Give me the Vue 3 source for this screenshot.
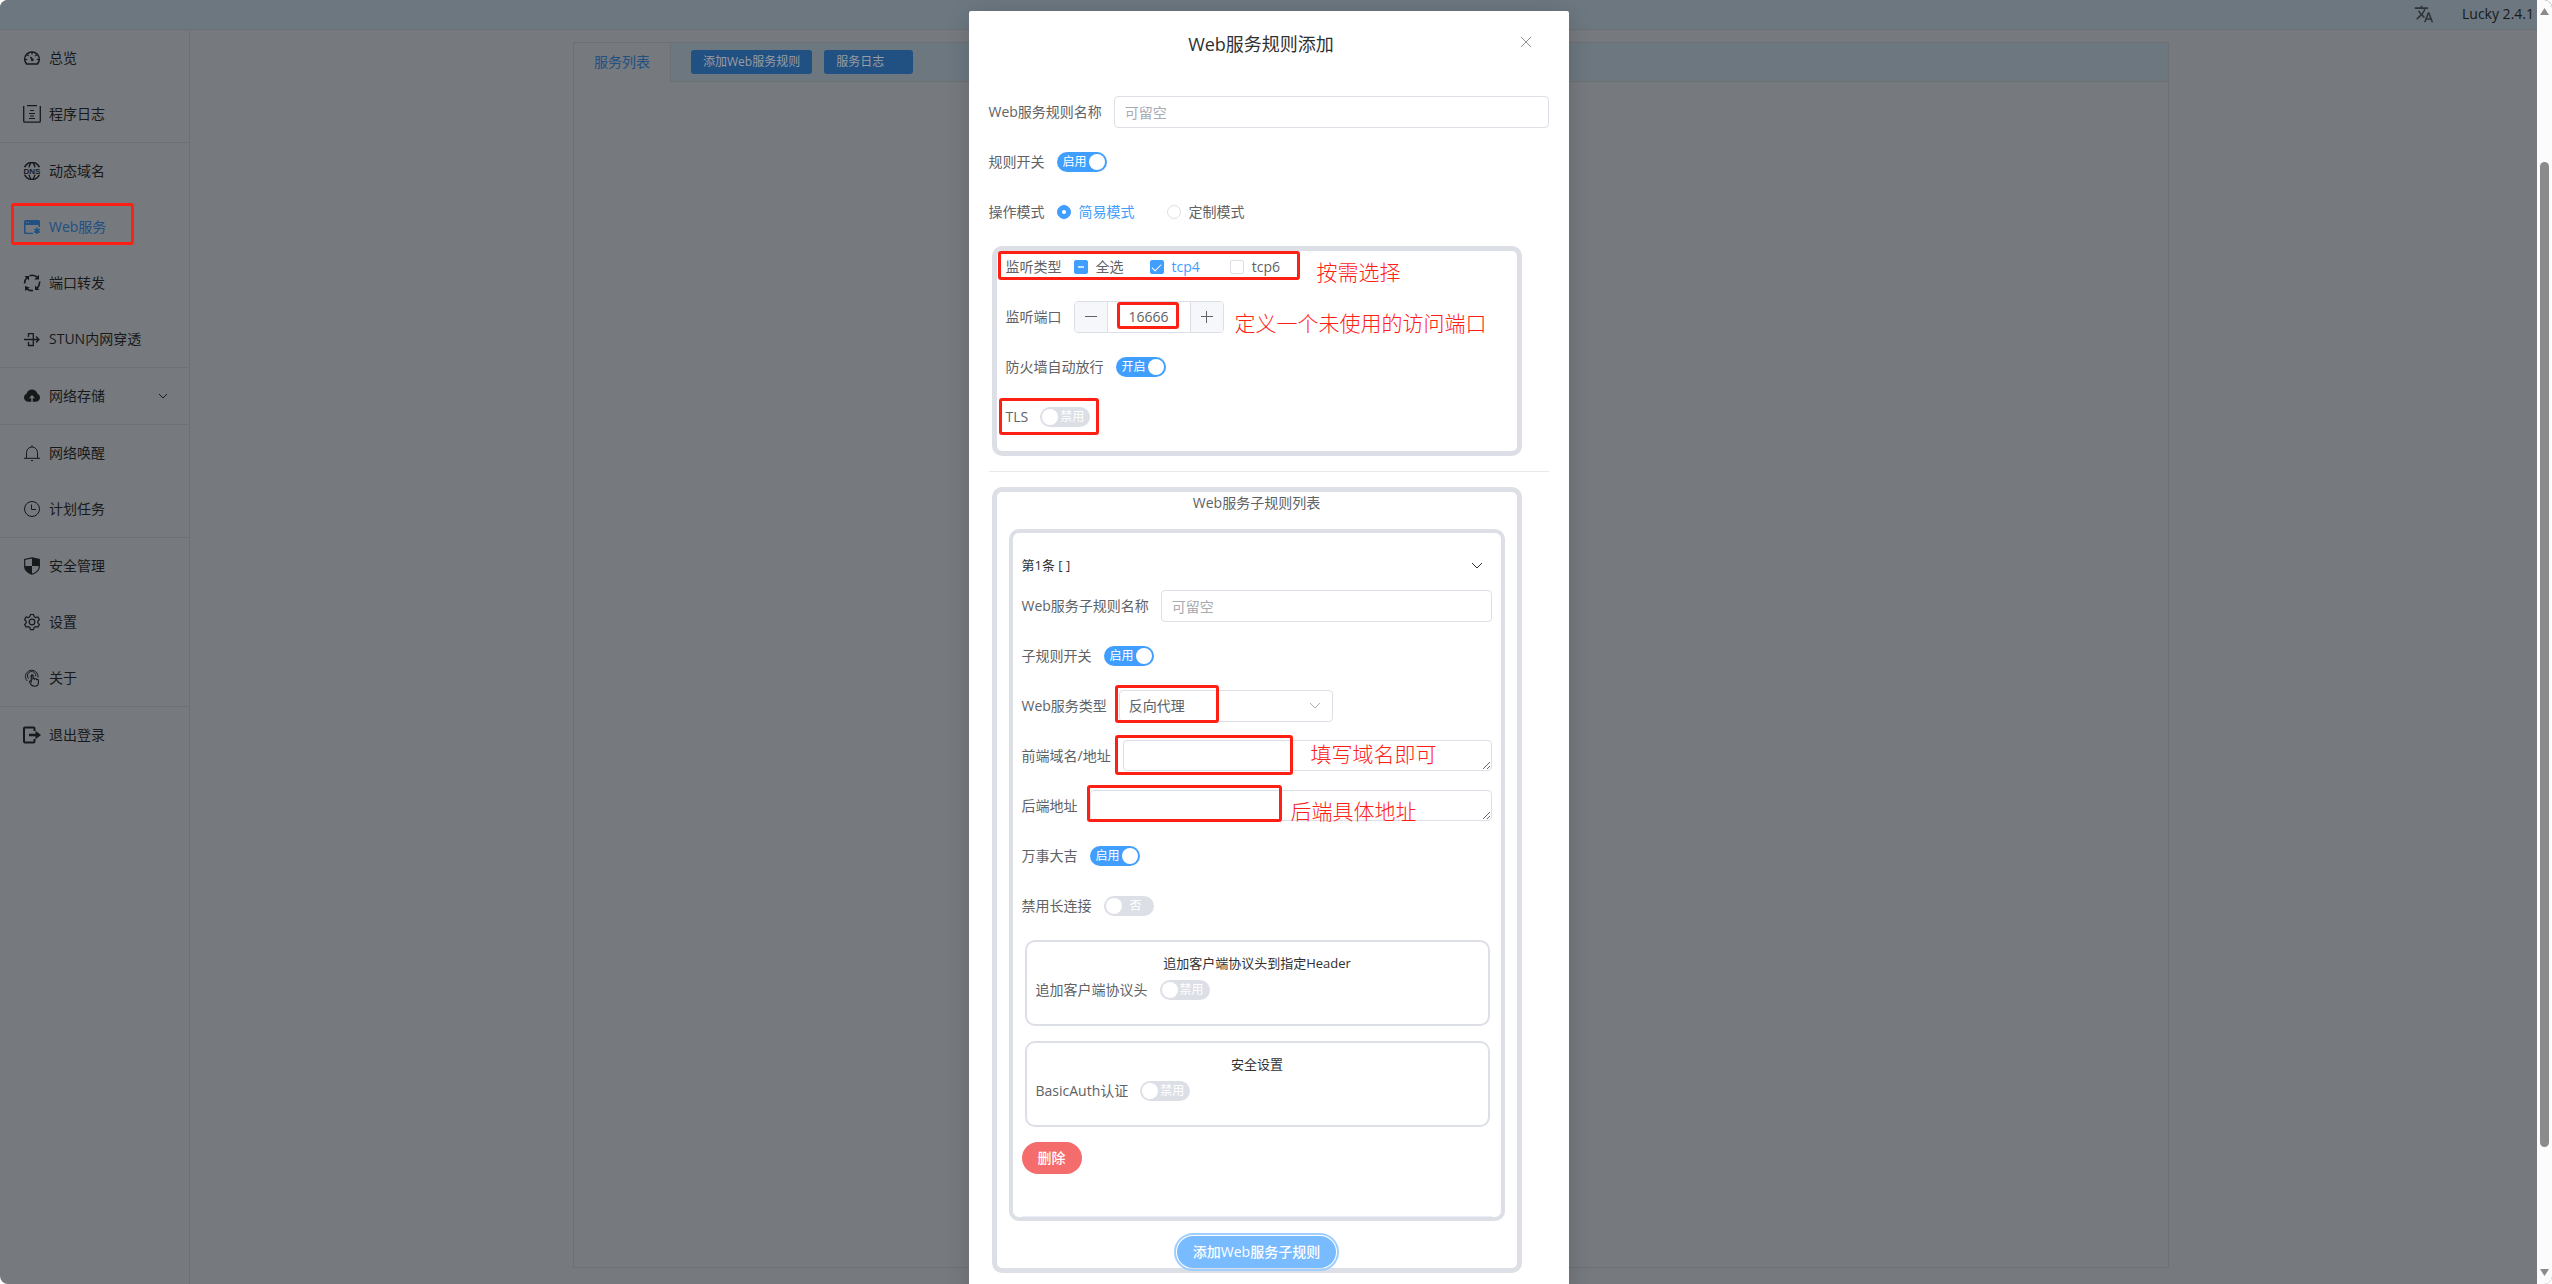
<template>
  <div class="page">
    <header class="topbar">
      <button class="lang" aria-label="语言">
        <svg viewBox="0 0 24 24" width="20" height="20" fill="currentColor">
          <path d="M12.87 15.07l-2.54-2.51.03-.03c1.74-1.94 2.98-4.17 3.71-6.53H17V4h-7V2H8v2H1v1.99h11.17C11.5 7.92 10.44 9.75 9 11.35 8.07 10.32 7.3 9.19 6.69 8h-2c.73 1.63 1.73 3.17 2.98 4.56l-5.09 5.02L4 19l5-5 3.11 3.11.76-2.04zM18.5 10h-2L12 22h2l1.12-3h4.75L21 22h2l-4.5-12zm-2.62 7l1.62-4.33L19.12 17h-3.24z" />
        </svg>
      </button>
      <span>Lucky 2.4.1</span>
    </header>

    <div class="body">
      <nav class="sidebar">
        <div v-for="(group, i) in menu" :key="i" class="group">
          <a v-for="item in group" :key="item.text" href="#" class="item" :class="{ active: item.active }">
            <svg viewBox="0 0 18 18" width="18" height="18" fill="none" stroke="currentColor" stroke-width="1.2" v-html="icons[item.icon]"></svg>
            <span>{{ item.text }}</span>
            <svg v-if="item.more" class="more" viewBox="0 0 12 12" width="12" height="12" fill="none" stroke="currentColor">
              <path d="M2 4l4 4 4-4" />
            </svg>
            <i v-if="item.active" class="mark mark-menu"></i>
          </a>
        </div>
      </nav>

      <main class="main">
        <section class="tabs">
          <div class="tabs-head">
            <button class="tab">服务列表</button>
            <div class="tools">
              <button class="tool">添加Web服务规则</button>
              <button class="tool log">服务日志</button>
            </div>
          </div>
        </section>
      </main>
    </div>

    <div class="overlay">
      <div class="dialog" role="dialog" aria-labelledby="dialog-title">
        <div class="dialog-head">
          <h1 id="dialog-title">Web服务规则添加</h1>
          <button class="close" aria-label="关闭">
            <svg viewBox="0 0 16 16" width="16" height="16" fill="none" stroke="currentColor">
              <path d="M3 3l10 10M13 3L3 13" />
            </svg>
          </button>
        </div>

        <form class="form" @submit.prevent>
          <div class="row">
            <label for="name">Web服务规则名称</label>
            <input id="name" v-model="rule.name" class="text" type="text" placeholder="可留空">
          </div>
          <div class="row">
            <label for="enable">规则开关</label>
            <span class="switch">
              <input id="enable" v-model="rule.enable" type="checkbox">
              <span>{{ rule.enable ? '启用' : '禁用' }}</span>
            </span>
          </div>
          <div class="row">
            <span>操作模式</span>
            <div class="choices">
              <label class="choice"><input v-model="rule.mode" type="radio" name="mode" value="simple"><span>简易模式</span></label>
              <label class="choice"><input v-model="rule.mode" type="radio" name="mode" value="custom"><span>定制模式</span></label>
            </div>
          </div>

          <div class="box">
            <div class="row">
              <span>监听类型</span>
              <div class="choices types">
                <label class="choice all"><input type="checkbox" :indeterminate="partial" @change="toggleAll"><span>全选</span></label>
                <label class="choice"><input v-model="rule.tcp4" type="checkbox"><span>tcp4</span></label>
                <label class="choice"><input v-model="rule.tcp6" type="checkbox"><span>tcp6</span></label>
              </div>
            </div>
            <div class="row">
              <label for="port">监听端口</label>
              <div class="number">
                <button type="button" aria-label="减少" @click="rule.port--">
                  <svg viewBox="0 0 14 14" width="14" height="14" stroke="currentColor"><path d="M1 6.500h12" /></svg>
                </button>
                <input id="port" v-model.number="rule.port" type="text">
                <button type="button" aria-label="增加" @click="rule.port++">
                  <svg viewBox="0 0 14 14" width="14" height="14" stroke="currentColor"><path d="M1 6.500h12M6.500 1v12" /></svg>
                </button>
              </div>
            </div>
            <div class="row">
              <label for="firewall">防火墙自动放行</label>
              <span class="switch">
                <input id="firewall" v-model="rule.firewall" type="checkbox">
                <span>{{ rule.firewall ? '开启' : '关闭' }}</span>
              </span>
            </div>
            <div class="row">
              <label for="tls">TLS</label>
              <span class="switch">
                <input id="tls" v-model="rule.tls" type="checkbox">
                <span>{{ rule.tls ? '启用' : '禁用' }}</span>
              </span>
            </div>
          </div>

          <hr>

          <div class="box list">
            <p class="list-title">Web服务子规则列表</p>
            <div class="sub">
              <button type="button" class="sub-head">
                <span>第1条 [ ]</span>
                <svg viewBox="0 0 12 12" width="12" height="12" fill="none" stroke="currentColor"><path d="M1 4l5 5 5-5" /></svg>
              </button>
              <div class="sub-body">
                <div class="row">
                  <label for="sub-name">Web服务子规则名称</label>
                  <input id="sub-name" v-model="sub.name" class="text" type="text" placeholder="可留空">
                </div>
                <div class="row">
                  <label for="sub-enable">子规则开关</label>
                  <span class="switch">
                    <input id="sub-enable" v-model="sub.enable" type="checkbox">
                    <span>{{ sub.enable ? '启用' : '禁用' }}</span>
                  </span>
                </div>
                <div class="row">
                  <label for="sub-type">Web服务类型</label>
                  <div class="select">
                    <select id="sub-type" v-model="sub.type">
                      <option value="proxy">反向代理</option>
                      <option value="redirect">重定向</option>
                    </select>
                    <svg viewBox="0 0 12 12" width="12" height="12" fill="none" stroke="currentColor"><path d="M1 3l5 5 5-5" /></svg>
                  </div>
                </div>
                <div class="row">
                  <label for="domains">前端域名/地址</label>
                  <textarea id="domains" v-model="sub.domains" rows="1"></textarea>
                </div>
                <div class="row">
                  <label for="backend">后端地址</label>
                  <textarea id="backend" v-model="sub.backend" rows="1"></textarea>
                </div>
                <div class="row">
                  <label for="lucky">万事大吉</label>
                  <span class="switch">
                    <input id="lucky" v-model="sub.lucky" type="checkbox">
                    <span>{{ sub.lucky ? '启用' : '禁用' }}</span>
                  </span>
                </div>
                <div class="row">
                  <label for="keepalive">禁用长连接</label>
                  <span class="switch short">
                    <input id="keepalive" v-model="sub.noKeepAlive" type="checkbox">
                    <span>{{ sub.noKeepAlive ? '是' : '否' }}</span>
                  </span>
                </div>

                <div class="card">
                  <p>追加客户端协议头到指定Header</p>
                  <div class="row">
                    <label for="proto">追加客户端协议头</label>
                    <span class="switch">
                      <input id="proto" v-model="sub.proto" type="checkbox">
                      <span>{{ sub.proto ? '启用' : '禁用' }}</span>
                    </span>
                  </div>
                </div>
                <div class="card">
                  <p>安全设置</p>
                  <div class="row">
                    <label for="auth">BasicAuth认证</label>
                    <span class="switch">
                      <input id="auth" v-model="sub.auth" type="checkbox">
                      <span>{{ sub.auth ? '启用' : '禁用' }}</span>
                    </span>
                  </div>
                </div>
                <button type="button" class="pill danger">删除</button>
              </div>
            </div>
            <button type="button" class="pill add">添加Web服务子规则</button>
          </div>
        </form>

        <!-- red notes pinned over the form -->
        <i class="mark mark-types"></i>
        <i class="mark mark-port"></i>
        <i class="mark mark-tls"></i>
        <i class="mark mark-kind"></i>
        <i class="mark mark-domain"></i>
        <i class="mark mark-backend"></i>
        <span class="note note-types">按需选择</span>
        <span class="note note-port">定义一个未使用的访问端口</span>
        <span class="note note-domain">填写域名即可</span>
        <span class="note note-backend">后端具体地址</span>
      </div>
    </div>

    <div class="scrollbar">
      <svg viewBox="0 0 15 20" width="15" height="20"><path d="M7.500 8l4.500 7h-9z" fill="#8b8b8b" /></svg>
      <div class="track"><div class="thumb"></div></div>
      <svg viewBox="0 0 15 20" width="15" height="20"><path d="M7.500 12l4.500-7h-9z" fill="#8b8b8b" /></svg>
    </div>
  </div>
</template>

<script setup>
import { reactive, computed } from 'vue'

const rule = reactive({
  name: '',
  enable: true,
  mode: 'simple',
  tcp4: true,
  tcp6: false,
  port: 16666,
  firewall: true,
  tls: false
})

const sub = reactive({
  name: '',
  enable: true,
  type: 'proxy',
  domains: '',
  backend: '',
  lucky: true,
  noKeepAlive: false,
  proto: false,
  auth: false
})

const partial = computed(() => rule.tcp4 !== rule.tcp6)

const toggleAll = (e) => {
  rule.tcp4 = e.target.checked
  rule.tcp6 = e.target.checked
}

const menu = [
  [
    { text: '总览', icon: 'gauge' },
    { text: '程序日志', icon: 'log' }
  ],
  [
    { text: '动态域名', icon: 'dns' },
    { text: 'Web服务', icon: 'web', active: true },
    { text: '端口转发', icon: 'cycle' },
    { text: 'STUN内网穿透', icon: 'stun' }
  ],
  [{ text: '网络存储', icon: 'cloud', more: true }],
  [
    { text: '网络唤醒', icon: 'bell' },
    { text: '计划任务', icon: 'clock' }
  ],
  [
    { text: '安全管理', icon: 'shield' },
    { text: '设置', icon: 'gear' },
    { text: '关于', icon: 'touch' }
  ],
  [{ text: '退出登录', icon: 'exit' }]
]

const icons = {
  gauge: '<path stroke-width="1.5" d="M3.500 15h11c1.100-1.400 1.800-3 1.800-4.800a7.300 7.300 0 0 0-14.600 0c0 1.800.7 3.400 1.800 4.800z"/><path d="M9 3v2.500M2 10.500h2.300M13.700 10.500H16M4.200 5.500l1.500 1.500M13.800 5.500l-1.500 1.500"/><path stroke-width="1.500" d="M7.500 8l1.800 2.700"/><circle cx="9.300" cy="10.800" r=".8" fill="currentColor"/>',
  log: '<path stroke-width="1.300" d="M.7 1v15.200c0 .6.400 1 1 1h14.600c.6 0 1-.4 1-1V1M4 .7h10"/><path stroke-width="1.200" d="M7 5.500h4M6 8.500h6M7 11h4M6 13.500h6"/>',
  dns: '<path stroke-width="1.500" d="M1.600 5.200a8.200 8.200 0 0 1 14.800 0M1.600 12.800a8.200 8.200 0 0 0 14.800 0"/><path stroke-width="1.300" d="M6 5.300C6.300 3.500 7 2 8 1M12 5.300C11.700 3.500 11 2 10 1M6 12.700c.3 1.800 1 3.300 2 4.300M12 12.700c-.3 1.800-1 3.300-2 4.300"/><text x="9" y="11.600" text-anchor="middle" font-size="8" font-weight="700" font-family="Liberation Sans, sans-serif" fill="currentColor" stroke="none">DNS</text>',
  web: '<path fill="currentColor" stroke="none" d="M2.500 2h13a1.500 1.500 0 0 1 1.500 1.500V9h-1.500V7h-13v7c0 .5.200.7.700.7H10V16H2.500A1.500 1.500 0 0 1 1 14.500v-11A1.500 1.500 0 0 1 2.500 2z"/><path stroke="#76797e" stroke-width="1" d="M3 4.500h1M5 4.500h1"/><path stroke-width="1.500" d="M14 9.500v6.500M11.200 11.200l5.600 3.200M16.800 11.200l-5.600 3.200"/>',
  cycle: '<path stroke-width="1.600" d="M1.500 9.500c0-2.500.8-4.500 2.500-6M6.500 1.700c3-.9 6-.3 8 1.800M16.600 7.500c.2 2.500-.7 5-2.600 6.800M10 16.500c-2.300.3-4.500-.3-6-1.700"/><path fill="currentColor" stroke="none" d="M1.500 2H6v4.500zM16 .8v4.700h-4.700zM16.500 16H12v-4.500zM2 17v-5l4.700 1.500z"/>',
  stun: '<path stroke-width="1.300" d="M1 9.500h15M13 6.500l3 3-3 3M5.500 7V3.600h4.800V7M5.500 12v3.500h4.800V12M10.300 3.600v12M5.500 3.600V6"/>',
  cloud: '<path fill="currentColor" stroke="none" fill-rule="evenodd" d="M9 2.500c2.700 0 4.900 1.800 5.400 4.300 1.600.5 2.600 1.900 2.600 3.800 0 2.300-1.700 4.100-4 4.100H5c-2.300 0-4-1.800-4-4.100 0-1.900 1-3.300 2.600-3.800C4.100 4.300 6.300 2.500 9 2.500zM9 8l-3 3.200h2.300v3.500h1.400v-3.500H12z"/>',
  bell: '<path stroke-width="1" d="M3.500 14V8.500a5.500 5.500 0 0 1 11 0V14M1 14.300h16M8 16.600h2M9 1.200V3"/>',
  clock: '<circle stroke-width="1" cx="9" cy="9" r="7.500"/><path stroke-width="1" d="M8.500 4.500v5h4.500"/>',
  shield: '<path d="M9 .8l7.300 1.600v7c0 3.400-3 6.300-7.300 7.900-4.300-1.600-7.300-4.500-7.300-7.900v-7z"/><path fill="currentColor" stroke="none" d="M9 .8l7.300 1.600V9H9zM1.700 9H9v8.300c-4.300-1.600-7.300-4.500-7.300-8.300z"/>',
  gear: '<path d="M7.500 1.500h3l.7 2.200 1.400.8 2.300-.5 1.500 2.600-1.600 1.700v1.500l1.600 1.700-1.500 2.600-2.300-.5-1.400.8-.7 2.200h-3l-.7-2.200-1.400-.8-2.300.5-1.500-2.600 1.600-1.700V8.300L1.600 6.600 3.100 4l2.300.5 1.400-.8z"/><circle cx="9" cy="9" r="2.800"/>',
  touch: '<path stroke-width="1" d="M4.300 12A6.300 6.300 0 1 1 15 8.500M5.800 9.800a4.200 4.200 0 1 1 7-2.500M7.300 7.500a1.900 1.900 0 0 1 3.500 0"/><path stroke-width="1.100" d="M8.300 12.500V6.800c0-1.200 1.700-1.200 1.700 0v3c.8-.9 1.800-.5 1.900.3.700-.6 1.700-.3 1.800.5.900-.4 1.700 0 1.700 1v1.800c0 2.200-1.500 3.800-3.900 3.800-2.700 0-3.900-1.700-4.900-4.200-.4-1 .9-1.600 1.700-.5z"/>',
  exit: '<path stroke-width="2" d="M11.500 5V2.500c0-.5-.5-1-1-1H2c-.5 0-1 .5-1 1v13c0 .5.500 1 1 1h8.500c.5 0 1-.5 1-1V13"/><path fill="currentColor" stroke="none" d="M6 7.700h6.500V4.800L18 9l-5.500 4.200v-2.900H6z"/>'
}
</script>

<style>
body {
  background: #fff;
}
</style>

<style scoped>
.page {
  position: relative;
  display: flex;
  flex-direction: column;
  height: 100vh;
  overflow: hidden;
  border-radius: 8px;
  background: #76797e;
  color: #18191b;
  font-family: "Open Sans", "Noto Sans CJK SC", sans-serif;
  font-size: 14px;
  line-height: 20px;
}
* {
  box-sizing: border-box;
}
button,
input,
select,
textarea {
  margin: 0;
  padding: 0;
  border: 0;
  background: none;
  color: inherit;
  font: inherit;
}
button {
  cursor: pointer;
}
p,
h1 {
  margin: 0;
  font-weight: 400;
}
svg {
  display: block;
  flex: none;
}

/* top bar */
.topbar {
  display: flex;
  justify-content: flex-end;
  align-items: center;
  gap: 28px;
  height: 30px;
  padding: 0 18px 2px 0;
  border-bottom: 1px solid #6b7073;
  background: #6c777f;
}
.lang {
  color: #303337;
}

/* side menu */
.body {
  display: flex;
  flex: 1;
}
.sidebar {
  width: 190px;
  border-right: 1px solid #6c7073;
}
.group + .group {
  border-top: 1px solid #6c7073;
}
.item {
  position: relative;
  display: flex;
  align-items: center;
  gap: 8px;
  height: 56px;
  padding: 0 20px 0 23px;
  color: inherit;
  text-decoration: none;
}
.item.active {
  color: #215083;
}
.more {
  margin-left: auto;
}

/* content */
.main {
  display: flex;
  flex: 1;
  padding: 12px 383px 16px;
}
.tabs {
  flex: 1;
  border: 1px solid #6c7073;
}
.tabs-head {
  display: flex;
  height: 39px;
  background: #6c777f;
}
.tab {
  width: 97px;
  padding-bottom: 2px;
  border-right: 1px solid #6c7073;
  background: #76797e;
  color: #215083;
}
.tools {
  display: flex;
  flex: 1;
  align-items: center;
  gap: 12px;
  padding-left: 20px;
  border-bottom: 1px solid #6c7073;
}
.tool {
  height: 24px;
  padding: 0 12px;
  border-radius: 3px;
  background: #215083;
  color: #9a9da1;
  font-size: 12px;
}
.log {
  padding-right: 29px;
}

/* dialog */
.overlay {
  position: absolute;
  inset: 0 15px 0 0;
  overflow: hidden;
}
.dialog {
  position: relative;
  width: 600px;
  min-height: 100%;
  margin: 11px auto 0;
  border-radius: 2px;
  background: #fff;
  box-shadow: 0 4px 24px rgba(0, 0, 0, 0.16);
  color: #606266;
}
.dialog-head {
  display: flex;
  align-items: center;
  height: 65px;
  padding: 0 35px 0 20px;
}
h1 {
  flex: 1;
  color: #303133;
  font-size: 18px;
  line-height: 24px;
  text-align: center;
}
.close {
  position: absolute;
  top: 23px;
  right: 35px;
  color: #909399;
}
.form {
  padding: 20px;
}
.row {
  display: flex;
  align-items: center;
  gap: 12px;
  height: 32px;
  margin-bottom: 18px;
}
.text,
textarea {
  flex: 1;
  height: 32px;
  min-width: 0;
  padding: 0 10px;
  border: 1px solid #dcdfe6;
  border-radius: 4px;
}
.text::placeholder {
  color: #a8abb2;
}
textarea {
  align-self: flex-start;
  height: 31px;
  padding: 5px 10px;
  resize: vertical;
}

/* switch, text is laid over the input */
.switch {
  display: grid;
  width: 50px;
}
.switch > * {
  grid-area: 1 / 1;
}
.switch input {
  display: flex;
  align-items: center;
  width: 50px;
  height: 20px;
  padding: 0 2px;
  border-radius: 10px;
  background: #dcdfe6;
  appearance: none;
}
.switch input:checked {
  justify-content: flex-end;
  background: #409eff;
}
.switch input::before {
  content: "";
  width: 16px;
  height: 16px;
  border-radius: 50%;
  background: #fff;
}
.switch span {
  padding: 0 6px 0 20px;
  color: #fff;
  font-size: 12px;
  line-height: 20px;
  pointer-events: none;
}
.switch input:checked + span {
  padding: 0 20px 0 6px;
}
.short span {
  text-align: center;
}

/* radios and tick boxes */
.choices {
  display: flex;
  gap: 32px;
}
.types {
  gap: 30px;
}
.all {
  margin-right: -4px;
}
.choice {
  display: flex;
  align-items: center;
  gap: 8px;
}
.choice input {
  display: grid;
  place-items: center;
  width: 14px;
  height: 14px;
  border: 1px solid #dcdfe6;
  border-radius: 2px;
  background: #fff;
  appearance: none;
}
.choice input[type="radio"] {
  border-radius: 50%;
}
.choice input:checked,
.choice input:indeterminate[type="checkbox"] {
  border-color: #409eff;
  background: #409eff;
}
.choice input:checked + span {
  color: #409eff;
}
.choice input[type="radio"]:checked::before {
  content: "";
  width: 4px;
  height: 4px;
  border-radius: 50%;
  background: #fff;
}
.choice input[type="checkbox"]:checked::before {
  content: "";
  width: 4px;
  height: 8px;
  margin-bottom: 2px;
  border: solid #fff;
  border-width: 0 1px 1px 0;
  transform: rotate(45deg);
}
.choice input[type="checkbox"]:indeterminate::before {
  content: "";
  width: 6px;
  height: 2px;
  background: #c6e2ff;
}

.number {
  display: flex;
  width: 150px;
  height: 32px;
  overflow: hidden;
  border: 1px solid #dcdfe6;
  border-radius: 4px;
}
.number button {
  display: grid;
  place-items: center;
  width: 32px;
  background: #f5f7fa;
}
.number input {
  flex: 1;
  min-width: 0;
  border: solid #dcdfe6;
  border-width: 0 1px;
  text-align: center;
}

.box {
  width: 530px;
  margin-left: 3px;
  padding: 0 9px;
  border: 5px solid #dcdfe6;
  border-radius: 10px;
}
hr {
  height: 1px;
  margin: 15px 0;
  border: 0;
  background: #e8eaec;
}
.list {
  display: flex;
  flex-direction: column;
  padding: 0 12px;
}
.list-title {
  height: 37px;
  line-height: 22px;
  text-align: center;
}
.sub {
  padding: 9px 9px 0;
  border: 4px solid #dcdfe6;
  border-radius: 10px;
}
.sub-head {
  display: flex;
  justify-content: space-between;
  align-items: center;
  width: 100%;
  height: 48px;
  padding: 0 9px 2px 0;
  color: #303133;
  font-size: 13px;
}
.sub-body {
  padding-bottom: 42px;
  border-bottom: 1px solid #ebeef5;
}
.select {
  display: grid;
  align-items: center;
  width: 214px;
}
.select > * {
  grid-area: 1 / 1;
}
.select select {
  height: 32px;
  padding: 0 9px;
  border: 1px solid #dcdfe6;
  border-radius: 4px;
  appearance: none;
}
.select svg {
  justify-self: end;
  margin-right: 12px;
  color: #a8abb2;
  pointer-events: none;
}
.card {
  margin: 0 2px 15px 3px;
  padding: 11px 9px 0;
  border: 2px solid #dcdfe6;
  border-radius: 10px;
}
.card p {
  height: 21px;
  color: #303133;
  font-size: 13px;
  text-align: center;
}
.pill {
  height: 32px;
  padding: 0 16px;
  border-radius: 16px;
  color: #fff;
  font-weight: 500;
}
.danger {
  display: block;
  background: #f56c6c;
}
.add {
  align-self: center;
  margin-top: 15px;
  outline: 2px solid #a0cfff;
  outline-offset: 1px;
  background: #79bbff;
}

/* notes */
.mark {
  position: absolute;
  border: 3px solid #ff2015;
  border-radius: 3px;
  pointer-events: none;
}
.mark-menu {
  top: 4px;
  left: 11px;
  width: 123px;
  height: 42px;
}
.mark-types {
  top: 240px;
  left: 29px;
  width: 302px;
  height: 29px;
}
.mark-port {
  top: 291px;
  left: 148px;
  width: 62px;
  height: 27px;
}
.mark-tls {
  top: 387px;
  left: 30px;
  width: 100px;
  height: 37px;
}
.mark-kind {
  top: 674px;
  left: 146px;
  width: 104px;
  height: 38px;
}
.mark-domain {
  top: 724px;
  left: 146px;
  width: 178px;
  height: 40px;
}
.mark-backend {
  top: 774px;
  left: 118px;
  width: 195px;
  height: 37px;
}
.note {
  position: absolute;
  color: #ff2015;
  font-size: 21px;
  font-weight: 300;
  line-height: 28px;
  white-space: nowrap;
}
.note-types {
  top: 247px;
  left: 348px;
}
.note-port {
  top: 298px;
  left: 266px;
}
.note-domain {
  top: 729px;
  left: 342px;
}
.note-backend {
  top: 786px;
  left: 322px;
}

/* window scroll bar */
.scrollbar {
  position: absolute;
  inset: 0 0 0 auto;
  display: flex;
  flex-direction: column;
  width: 15px;
  background: #fcfcfc;
}
.track {
  display: grid;
  flex: 1;
  grid-template-rows: 142fr 985fr 117fr;
  padding: 0 3px;
}
.thumb {
  grid-row: 2;
  border-radius: 5px;
  background: #8b8b8b;
}
</style>
